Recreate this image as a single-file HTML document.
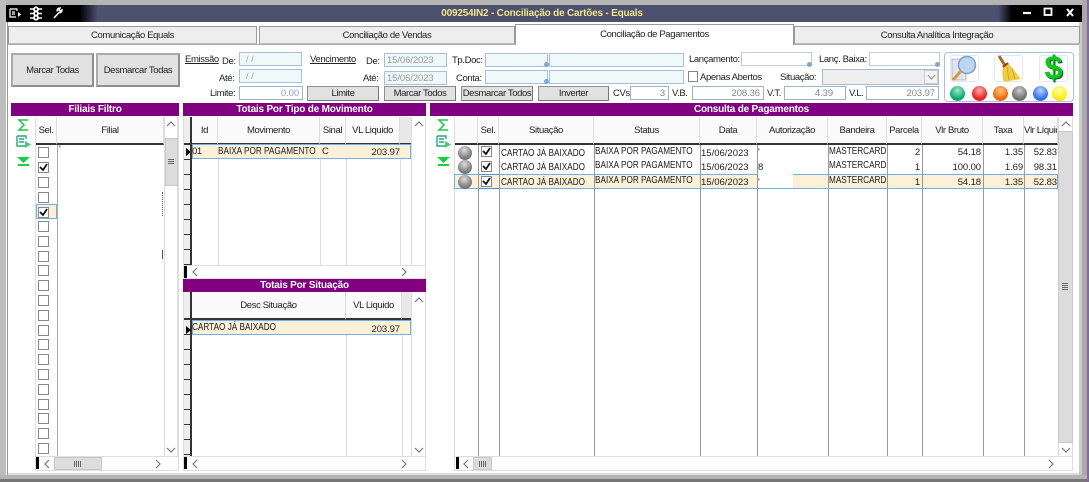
<!DOCTYPE html>
<html><head><meta charset="utf-8"><style>
html,body{margin:0;padding:0;background:#fff}
#p{position:relative;width:1089px;height:482px;overflow:hidden;background:#fff;font:9.5px "Liberation Sans","DejaVu Sans",sans-serif;letter-spacing:-.38px;color:#222;filter:blur(.3px)}
#p div,#p span.a{position:absolute;box-sizing:border-box}
.t{white-space:nowrap;line-height:12px}
.r{text-align:right;letter-spacing:-.1px}.c{text-align:center}
.d{letter-spacing:0}
.k{font-size:10px;letter-spacing:0;transform:scaleX(.82);transform-origin:0 50%}
.tab{background:#eee;border:1px solid #999;border-bottom:1px solid #bbb;text-align:center;line-height:18px;top:26px;height:18px}
.btn{background:#e1e1e1;border:1px solid #8f8f8f;border-right-color:#777;border-bottom-color:#777;text-align:center;line-height:14px;height:15px;top:86px;color:#222;white-space:nowrap}
.in{border:1px solid #a9c0d8;background:#f0f9f9;height:14px;color:#9aa;line-height:14px;padding-left:6px;letter-spacing:-.1px}
.w{border:1px solid #c4ccd4;background:#fff;height:14px}
.g{border:1px solid #9fb4c8;background:#fff;height:14px;color:#888;text-align:right;line-height:14px;padding-right:3px;top:86px;letter-spacing:-.1px}
.pur{background:#800080;color:#fff;font-weight:bold;text-align:center;height:13px;line-height:14px;font-size:10px;letter-spacing:-.2px}
.hd{background:#fafafa;top:117px;height:28px;border-bottom:2px solid #333;border-right:1px solid #ddd;text-align:center;line-height:28px}
.vl{width:1px;background:#999;top:145px}
.cb{width:11px;height:11px;border:1px solid #888;background:#fff;left:38px}
.cb svg,.ck svg{position:absolute;left:0;top:0}
.ck{width:11px;height:11px;border:1px solid #888;background:#fff;left:481px}
.ball{width:15px;height:15px;border-radius:50%;top:86px}
.gb{width:14px;height:14px;border-radius:50%;left:458px;background:radial-gradient(circle at 45% 30%,#ddd,#888 55%,#555)}
.sb{background:#fff;border:1px solid #ddd}
.th{background:#dcdcdc;border:1px solid #c8c8c8}
.ind{background:repeating-linear-gradient(#eee 0 14px,#333 14px 15px);border-right:2px solid #333}
.row{background:#fdf0d8;border-top:1px solid #6fb0e8;border-bottom:1px solid #6fb0e8}
</style></head><body><div id="p">

<!-- window frame -->
<div style="left:0;top:0;width:1089px;height:5px;background:#b4b4b4"></div>
<div style="left:0;top:0;width:6px;height:482px;background:#bdbdbd"></div>
<div style="left:7px;top:22px;width:1px;height:453px;background:#999"></div>
<div style="left:1079px;top:22px;width:3px;height:456px;background:#ccc"></div>
<div style="left:1082px;top:0;width:5px;height:482px;background:#a9a9a9"></div>
<div style="left:1087px;top:0;width:2px;height:482px;background:#7f6a9c"></div>
<div style="left:0;top:475px;width:1087px;height:4px;background:#b4b4b4"></div>
<div style="left:0;top:479px;width:1087px;height:3px;background:#777"></div>

<!-- title bar -->
<div style="left:6px;top:5px;width:1076px;height:17px;background:linear-gradient(90deg,#000 0,#000 74px,#4e5070 92px,#4e5070 992px,#000 1006px,#000 100%)"></div>
<div class="t c" style="left:292px;top:8px;width:500px;color:#f0e68c;font-weight:bold;font-size:10px;letter-spacing:-.2px">009254IN2 - Conciliação de Cartões - Equals</div>
<svg style="position:absolute;left:8px;top:6px" width="55" height="15" viewBox="0 0 55 15" fill="none" stroke="#fff">
<path d="M2 3h7v2M2 3v8h6M4 6h3M4 8h3" stroke-width="1.2"/><path d="M10 6l3 2.500-3 2.500z" fill="#fff" stroke="none"/>
<path d="M22 3h12M22 7.500h12M22 12h12" stroke-width="1.600"/>
<circle cx="28" cy="3.300" r="2.900" fill="#fff" stroke="none"/><circle cx="28" cy="7.500" r="2.900" fill="#fff" stroke="none"/><circle cx="28" cy="11.700" r="2.900" fill="#fff" stroke="none"/>
<circle cx="28" cy="3.300" r="1.100" fill="#000" stroke="none"/><circle cx="28" cy="7.500" r="1.100" fill="#000" stroke="none"/><circle cx="28" cy="11.700" r="1.100" fill="#000" stroke="none"/>
<path d="M46 12l5-5.500M51 6.500c2 .5 3-1 3-2.500l-2 1-1-1 1-2c-2 0-3.500 1.500-2.500 3.500" stroke-width="1.500"/>
</svg>
<svg style="position:absolute;left:1020px;top:5px" width="60" height="15" viewBox="0 0 60 15" fill="none" stroke="#fff">
<path d="M3 8h8" stroke-width="2.200"/><rect x="24.500" y="3.500" width="7" height="6.500" stroke-width="1.800"/><path d="M47 4l6 7M53 4l-6 7" stroke-width="2"/>
</svg>

<!-- tabs -->
<div class="tab" style="left:8px;width:249px">Comunicação Equals</div>
<div class="tab" style="left:259px;width:256px">Conciliação de Vendas</div>
<div class="tab" style="left:794px;width:286px">Consulta Analítica Integração</div>
<div style="left:8px;top:44px;width:1071px;height:1px;background:#aaa"></div>
<div style="left:515px;top:24px;width:279px;height:21px;background:#fff;border:1px solid #999;border-bottom:0;text-align:center;line-height:19px">Conciliação de Pagamentos</div>
<div style="left:8px;top:473px;width:1071px;height:2px;background:#ddd"></div>

<!-- top buttons -->
<div class="btn" style="left:11px;top:53px;width:83px;height:34px;line-height:32px;border-width:2px;border-color:#aaa #8f8f8f #8f8f8f #aaa">Marcar Todas</div>
<div class="btn" style="left:96px;top:53px;width:84px;height:34px;line-height:32px;border-width:2px;border-color:#aaa #8f8f8f #8f8f8f #aaa">Desmarcar Todas</div>

<!-- filter row -->
<div class="t" style="left:185px;top:54px;text-decoration:underline">Emissão</div>
<div class="t" style="left:222px;top:56px">De:</div>
<div class="in" style="left:239px;top:52px;width:63px">/ /</div>
<div class="t" style="left:219px;top:73px">Até:</div>
<div class="in" style="left:239px;top:69px;width:63px">/ /</div>
<div class="t" style="left:210px;top:88px">Limite:</div>
<div class="g" style="left:239px;width:64px;color:#99c">0.00</div>
<div class="btn" style="left:307px;width:72px">Limite</div>

<div class="t" style="left:310px;top:54px;text-decoration:underline">Vencimento</div>
<div class="t" style="left:366px;top:56px">De:</div>
<div class="in" style="left:384px;top:53px;width:63px;color:#999;padding-left:2px">15/06/2023</div>
<div class="t" style="left:363px;top:73px">Até:</div>
<div class="in" style="left:384px;top:71px;width:63px;color:#999;padding-left:2px">15/06/2023</div>
<div class="btn" style="left:384px;width:72px">Marcar Todos</div>
<div class="btn" style="left:461px;width:72px">Desmarcar Todos</div>
<div class="btn" style="left:538px;width:71px">Inverter</div>

<div class="t" style="left:452px;top:55px">Tp.Doc:</div>
<div class="in" style="left:485px;top:53px;width:63px"></div>
<div class="in" style="left:549px;top:53px;width:135px"></div>
<div class="t" style="left:456px;top:73px">Conta:</div>
<div class="in" style="left:485px;top:70px;width:63px"></div>
<div class="in" style="left:549px;top:70px;width:135px"></div>
<div style="left:544px;top:62px;width:5px;height:5px;border-radius:50%;background:#7fa8d8"></div>
<div style="left:544px;top:79px;width:5px;height:5px;border-radius:50%;background:#7fa8d8"></div>

<div class="t" style="left:689px;top:54px">Lançamento:</div>
<div class="w" style="left:741px;top:52px;width:71px"></div>
<div class="t" style="left:819px;top:54px">Lanç. Baixa:</div>
<div class="w" style="left:869px;top:52px;width:71px"></div>
<div style="left:807px;top:62px;width:5px;height:5px;border-radius:50%;background:#7fa8d8"></div>
<div style="left:935px;top:62px;width:5px;height:5px;border-radius:50%;background:#7fa8d8"></div>
<div style="left:688px;top:71px;width:10px;height:11px;border:1px solid #888;background:#fff"></div>
<div class="t" style="left:700px;top:72px">Apenas Abertos</div>
<div class="t" style="left:780px;top:72px">Situação:</div>
<div style="left:822px;top:69px;width:117px;height:16px;background:#eee;border:1px solid #a9bccf"></div>
<div style="left:924px;top:70px;width:14px;height:14px;border:1px solid #ccc;background:#f4f4f4"></div>
<svg style="position:absolute;left:927px;top:74px" width="9" height="7" fill="none" stroke="#999" stroke-width="1.200"><path d="M1 1l3.500 4L8 1"/></svg>

<div class="t" style="left:613px;top:88px">CVs</div>
<div class="g" style="left:630px;width:39px">3</div>
<div class="t" style="left:672px;top:88px">V.B.</div>
<div class="g" style="left:692px;width:72px">208.36</div>
<div class="t" style="left:767px;top:88px">V.T.</div>
<div class="g" style="left:784px;width:62px;padding-right:12px">4.39</div>
<div class="t" style="left:849px;top:88px">V.L.</div>
<div class="g" style="left:866px;width:73px">203.97</div>

<!-- icon panel -->
<div style="left:944px;top:52px;width:130px;height:50px;border:1px solid #a8c0dc;border-radius:4px;background:#fff"></div>
<div style="left:950px;top:55px;width:29px;height:27px;border:1px solid #e4e8ee;border-radius:3px"></div>
<div style="left:994px;top:55px;width:29px;height:27px;border:1px solid #e4e8ee;border-radius:3px"></div>
<div style="left:1039px;top:55px;width:29px;height:27px;border:1px solid #e4e8ee;border-radius:3px"></div>
<svg style="position:absolute;left:950px;top:55px" width="29" height="27" viewBox="0 0 29 27">
<path d="M2 4h14v21H2z" fill="#dfe4f0" stroke="#aab" stroke-width=".8"/>
<circle cx="17" cy="10" r="8.500" fill="#bcd6f2" stroke="#7d9fc8" stroke-width="1.500"/><path d="M11 16L3 25" stroke="#d89a3a" stroke-width="3"/></svg>
<svg style="position:absolute;left:994px;top:55px" width="29" height="27" viewBox="0 0 29 27">
<path d="M5 1l7 11" stroke="#a06a24" stroke-width="3"/><path d="M9 12l5-4 13 16-17 3c-2-4-2-10-1-15z" fill="#f0cc40"/><path d="M9 12l5-4" stroke="#b03020" stroke-width="2"/><path d="M13 12l2 13M18 13l3 11" stroke="#c8a028" stroke-width=".8"/></svg>
<div class="t" style="left:1039px;top:54px;width:29px;text-align:center;font:bold 33px/28px 'Liberation Sans',sans-serif;letter-spacing:0;color:#12c818;text-shadow:1px 1px 0 #053">$</div>
<div class="ball" style="left:950px;background:radial-gradient(circle at 50% 30%,#9fe8c8,#10b070 60%,#0a8a58)"></div>
<div class="ball" style="left:972px;background:radial-gradient(circle at 50% 30%,#ffb0b0,#f02828 60%,#c81818)"></div>
<div class="ball" style="left:993px;background:radial-gradient(circle at 50% 30%,#ffc890,#f86c08 60%,#d85800)"></div>
<div class="ball" style="left:1012px;background:radial-gradient(circle at 50% 30%,#ccc,#777 60%,#555)"></div>
<div class="ball" style="left:1033px;background:radial-gradient(circle at 50% 30%,#b8d4ff,#3c78ec 60%,#2458c8)"></div>
<div class="ball" style="left:1052px;background:radial-gradient(circle at 50% 30%,#ffffc0,#fff010 60%,#e0d000)"></div>

<!-- purple bars -->
<div class="pur" style="left:11px;top:103px;width:168px">Filiais Filtro</div>
<div class="pur" style="left:183px;top:103px;width:243px">Totais Por Tipo de Movimento</div>
<div class="pur" style="left:430px;top:103px;width:643px">Consulta de Pagamentos</div>
<div class="pur" style="left:183px;top:279px;width:243px">Totais Por Situação</div>

<!-- side icons -->
<svg style="position:absolute;left:15px;top:117px" width="18" height="52" viewBox="0 0 18 52" fill="none">
<path d="M13 3H4l5 5-5 5h9" stroke="#18c848" stroke-width="1.500"/>
<path d="M2 19h9v3M2 19v10h8M4 22h5M4 25h5" stroke="#2aa878" stroke-width="1.400"/><path d="M10 24l6 3.500-6 3.500z" fill="#3fd070"/>
<path d="M2 40h13l-6.500 6z" fill="#18d040"/><path d="M3 47h11v2H3z" fill="#18d040"/></svg>
<svg style="position:absolute;left:435px;top:117px" width="18" height="52" viewBox="0 0 18 52" fill="none">
<path d="M13 3H4l5 5-5 5h9" stroke="#18c848" stroke-width="1.500"/>
<path d="M2 19h9v3M2 19v10h8M4 22h5M4 25h5" stroke="#2aa878" stroke-width="1.400"/><path d="M10 24l6 3.500-6 3.500z" fill="#3fd070"/>
<path d="M2 40h13l-6.500 6z" fill="#18d040"/><path d="M3 47h11v2H3z" fill="#18d040"/></svg>

<!-- GRID 1 -->
<div style="left:35px;top:117px;width:144px;height:354px;border:1px solid #ddd;border-top:0"></div>
<div class="hd" style="left:36px;width:21px">Sel.</div>
<div class="hd" style="left:57px;width:107px">Filial</div>
<div class="vl" style="left:57px;height:312px;background:#aaa"></div>
<div class="t" style="left:59px;top:144px">'</div>
<div style="left:162px;top:192px;width:1px;height:24px;border-left:1px dotted #555"></div>
<div style="left:162px;top:250px;width:1px;height:9px;background:#555"></div>
<div class="row" style="left:36px;top:204px;width:21px;height:15px;border:1px solid #6fb0e8"></div>
<div class="cb" style="top:147px"></div>
<div class="cb" style="top:162px"><svg width="9" height="9"><path d="M1 4l3 3 4-6" fill="none" stroke="#111" stroke-width="1.800"/></svg></div>
<div class="cb" style="top:177px"></div>
<div class="cb" style="top:192px"></div>
<div class="cb" style="top:207px"><svg width="9" height="9"><path d="M1 4l3 3 4-6" fill="none" stroke="#111" stroke-width="1.800"/></svg></div>
<div class="cb" style="top:221px"></div>
<div class="cb" style="top:236px"></div>
<div class="cb" style="top:251px"></div>
<div class="cb" style="top:265px"></div>
<div class="cb" style="top:280px"></div>
<div class="cb" style="top:295px"></div>
<div class="cb" style="top:310px"></div>
<div class="cb" style="top:325px"></div>
<div class="cb" style="top:339px"></div>
<div class="cb" style="top:354px"></div>
<div class="cb" style="top:369px"></div>
<div class="cb" style="top:384px"></div>
<div class="cb" style="top:399px"></div>
<div class="cb" style="top:413px"></div>
<div class="cb" style="top:428px"></div>
<div class="cb" style="top:443px"></div>
<div class="sb" style="left:164px;top:117px;width:14px;height:340px;border-width:0 1px"></div>
<svg style="position:absolute;left:166px;top:120px" width="10" height="8" fill="none" stroke="#777" stroke-width="1.200"><path d="M1 6l4-4 4 4"/></svg>
<div class="th" style="left:165px;top:138px;width:13px;height:48px"></div>
<div style="left:168px;top:159px;width:6px;height:6px;background:repeating-linear-gradient(#666 0 1px,#dcdcdc 1px 2px)"></div>
<svg style="position:absolute;left:166px;top:446px" width="10" height="8" fill="none" stroke="#777" stroke-width="1.200"><path d="M1 2l4 4 4-4"/></svg>
<div style="left:35px;top:456px;width:144px;height:1px;background:#ddd"></div>
<div style="left:36px;top:457px;width:3px;height:12px;background:#000"></div>
<svg style="position:absolute;left:43px;top:459px" width="8" height="10" fill="none" stroke="#777" stroke-width="1.200"><path d="M6 1L2 5l4 4"/></svg>
<div class="th" style="left:54px;top:457px;width:48px;height:13px"></div>
<div style="left:74px;top:461px;width:7px;height:6px;background:repeating-linear-gradient(90deg,#666 0 1px,#dcdcdc 1px 2px)"></div>
<svg style="position:absolute;left:154px;top:459px" width="8" height="10" fill="none" stroke="#777" stroke-width="1.200"><path d="M2 1l4 4-4 4"/></svg>

<!-- GRID 2 -->
<div style="left:183px;top:117px;width:243px;height:162px;border:1px solid #ddd;border-top:0"></div>
<div style="left:184px;top:117px;width:8px;height:28px;background:#eee;border-right:2px solid #333;border-bottom:2px solid #333"></div>
<div class="ind" style="left:184px;top:145px;width:8px;height:120px"></div>
<div class="hd" style="left:192px;width:26px">Id</div>
<div class="hd" style="left:218px;width:102px">Movimento</div>
<div class="hd" style="left:320px;width:26px">Sinal</div>
<div class="hd" style="left:346px;width:54px">VL Liquido</div>
<div class="hd" style="left:400px;width:11px;background:#e8e8e8;border-right:0"></div>
<div class="vl" style="left:218px;height:120px;background:#ddd"></div>
<div class="vl" style="left:320px;height:120px;background:#ddd"></div>
<div class="vl" style="left:346px;height:120px;background:#ddd"></div>
<div class="vl" style="left:400px;height:120px;background:#ddd"></div>
<div class="row t" style="left:192px;top:144px;width:219px;height:15px;border:1px solid #6fb0e8;line-height:12px"></div>
<div class="t" style="left:192px;top:146px">01</div>
<div class="t k" style="left:218px;top:146px">BAIXA POR PAGAMENTO</div>
<div class="t" style="left:322px;top:146px">C</div>
<div class="t r" style="left:346px;top:147px;width:54px">203.97</div>
<svg style="position:absolute;left:186px;top:148px" width="5" height="8"><path d="M0 0l5 4-5 4z" fill="#000"/></svg>
<div class="sb" style="left:411px;top:117px;width:15px;height:149px;border-width:0 1px"></div>
<svg style="position:absolute;left:414px;top:120px" width="10" height="8" fill="none" stroke="#777" stroke-width="1.200"><path d="M1 6l4-4 4 4"/></svg>
<div style="left:183px;top:265px;width:243px;height:1px;background:#ddd"></div>
<div style="left:184px;top:266px;width:3px;height:12px;background:#000"></div>
<svg style="position:absolute;left:191px;top:267px" width="8" height="10" fill="none" stroke="#777" stroke-width="1.200"><path d="M6 1L2 5l4 4"/></svg>
<svg style="position:absolute;left:400px;top:267px" width="8" height="10" fill="none" stroke="#777" stroke-width="1.200"><path d="M2 1l4 4-4 4"/></svg>

<!-- GRID 2b -->
<div style="left:183px;top:292px;width:243px;height:179px;border:1px solid #ddd;border-top:0"></div>
<div style="left:184px;top:292px;width:8px;height:28px;background:#eee;border-right:2px solid #333;border-bottom:2px solid #333"></div>
<div class="ind" style="left:184px;top:320px;width:8px;height:136px"></div>
<div class="hd" style="left:192px;top:292px;width:154px">Desc Situação</div>
<div class="hd" style="left:346px;top:292px;width:56px">VL Liquido</div>
<div class="hd" style="left:402px;top:292px;width:9px;background:#e8e8e8;border-right:0"></div>
<div class="vl" style="left:346px;top:320px;height:136px;background:#ddd"></div>
<div class="vl" style="left:402px;top:320px;height:136px;background:#ddd"></div>
<div class="row" style="left:192px;top:320px;width:219px;height:15px;border:1px solid #6fb0e8"></div>
<div class="t k" style="left:192px;top:322px">CARTAO JÁ BAIXADO</div>
<div class="t r" style="left:346px;top:324px;width:54px">203.97</div>
<svg style="position:absolute;left:186px;top:326px" width="5" height="8"><path d="M0 0l5 4-5 4z" fill="#000"/></svg>
<div class="sb" style="left:411px;top:292px;width:15px;height:165px;border-width:0 1px"></div>
<svg style="position:absolute;left:414px;top:296px" width="10" height="8" fill="none" stroke="#777" stroke-width="1.200"><path d="M1 6l4-4 4 4"/></svg>
<svg style="position:absolute;left:414px;top:446px" width="10" height="8" fill="none" stroke="#777" stroke-width="1.200"><path d="M1 2l4 4 4-4"/></svg>
<div style="left:183px;top:456px;width:243px;height:1px;background:#ddd"></div>
<div style="left:184px;top:457px;width:3px;height:12px;background:#000"></div>
<svg style="position:absolute;left:191px;top:459px" width="8" height="10" fill="none" stroke="#777" stroke-width="1.200"><path d="M6 1L2 5l4 4"/></svg>
<svg style="position:absolute;left:400px;top:459px" width="8" height="10" fill="none" stroke="#777" stroke-width="1.200"><path d="M2 1l4 4-4 4"/></svg>

<!-- GRID 3 -->
<div style="left:454px;top:117px;width:619px;height:354px;border:1px solid #ddd;border-top:0"></div>
<div class="hd" style="left:455px;width:23px"></div>
<div class="hd" style="left:478px;width:21px">Sel.</div>
<div class="hd" style="left:499px;width:95px">Situação</div>
<div class="hd" style="left:594px;width:106px">Status</div>
<div class="hd" style="left:700px;width:57px">Data</div>
<div class="hd" style="left:757px;width:71px">Autorização</div>
<div class="hd" style="left:828px;width:59px">Bandeira</div>
<div class="hd" style="left:887px;width:35px">Parcela</div>
<div class="hd" style="left:922px;width:61px">Vlr Bruto</div>
<div class="hd" style="left:983px;width:41px">Taxa</div>
<div class="hd" style="left:1024px;width:34px;overflow:hidden;white-space:nowrap;text-align:left">Vlr Líquido</div>
<!-- selected row -->
<div class="row" style="left:455px;top:174px;width:302px;height:15px"></div>
<div style="left:757px;top:174px;width:36px;height:15px;background:#fff;border-bottom:1px solid #6fb0e8"></div>
<div class="row" style="left:793px;top:174px;width:265px;height:15px;border-right:1px solid #6fb0e8"></div>
<div style="left:454px;top:174px;width:25px;height:15px;border:1px solid #6fb0e8"></div>
<div style="left:478px;top:174px;width:22px;height:15px;border:1px solid #4a90e0"></div>
<div class="vl" style="left:478px;height:311px"></div>
<div class="vl" style="left:499px;height:311px"></div>
<div class="vl" style="left:594px;height:311px"></div>
<div class="vl" style="left:700px;height:311px"></div>
<div class="vl" style="left:757px;height:311px"></div>
<div class="vl" style="left:828px;height:311px"></div>
<div class="vl" style="left:887px;height:311px"></div>
<div class="vl" style="left:922px;height:311px"></div>
<div class="vl" style="left:983px;height:311px"></div>
<div class="vl" style="left:1024px;height:311px"></div>

<div class="gb" style="top:146px"></div><div class="gb" style="top:160px"></div><div class="gb" style="top:175px"></div>
<div class="ck" style="top:146px"><svg width="9" height="9"><path d="M1 4l3 3 4-6" fill="none" stroke="#111" stroke-width="1.800"/></svg></div>
<div class="ck" style="top:161px"><svg width="9" height="9"><path d="M1 4l3 3 4-6" fill="none" stroke="#111" stroke-width="1.800"/></svg></div>
<div class="ck" style="top:176px"><svg width="9" height="9"><path d="M1 4l3 3 4-6" fill="none" stroke="#111" stroke-width="1.800"/></svg></div>

<div class="t k" style="left:501px;top:148px">CARTAO JÁ BAIXADO</div>
<div class="t k" style="left:595px;top:146px">BAIXA POR PAGAMENTO</div>
<div class="t d" style="left:701px;top:148px">15/06/2023</div>
<div class="t" style="left:758px;top:147px">'</div>
<div class="t k" style="left:829px;top:146px">MASTERCARD</div>
<div class="t r" style="left:887px;top:147px;width:33px">2</div>
<div class="t r" style="left:922px;top:147px;width:59px">54.18</div>
<div class="t r" style="left:983px;top:147px;width:40px">1.35</div>
<div class="t r" style="left:1024px;top:147px;width:33px">52.83</div>

<div class="t k" style="left:501px;top:162px">CARTAO JÁ BAIXADO</div>
<div class="t k" style="left:595px;top:160px">BAIXA POR PAGAMENTO</div>
<div class="t d" style="left:701px;top:162px">15/06/2023</div>
<div class="t" style="left:758px;top:162px">8</div>
<div class="t k" style="left:829px;top:160px">MASTERCARD</div>
<div class="t r" style="left:887px;top:162px;width:33px">1</div>
<div class="t r" style="left:922px;top:162px;width:59px">100.00</div>
<div class="t r" style="left:983px;top:162px;width:40px">1.69</div>
<div class="t r" style="left:1024px;top:162px;width:33px">98.31</div>

<div class="t k" style="left:501px;top:177px">CARTAO JÁ BAIXADO</div>
<div class="t k" style="left:595px;top:175px">BAIXA POR PAGAMENTO</div>
<div class="t d" style="left:701px;top:177px">15/06/2023</div>
<div class="t" style="left:758px;top:177px">'</div>
<div class="t k" style="left:829px;top:175px">MASTERCARD</div>
<div class="t r" style="left:887px;top:177px;width:33px">1</div>
<div class="t r" style="left:922px;top:177px;width:59px">54.18</div>
<div class="t r" style="left:983px;top:177px;width:40px">1.35</div>
<div class="t r" style="left:1024px;top:177px;width:33px">52.83</div>

<div class="sb" style="left:1058px;top:117px;width:15px;height:340px;border-width:0 1px"></div>
<svg style="position:absolute;left:1061px;top:120px" width="10" height="8" fill="none" stroke="#777" stroke-width="1.200"><path d="M1 6l4-4 4 4"/></svg>
<div class="th" style="left:1058px;top:131px;width:15px;height:312px"></div>
<div style="left:1062px;top:283px;width:6px;height:7px;background:repeating-linear-gradient(#666 0 1px,#dcdcdc 1px 2px)"></div>
<svg style="position:absolute;left:1061px;top:446px" width="10" height="8" fill="none" stroke="#777" stroke-width="1.200"><path d="M1 2l4 4 4-4"/></svg>
<div style="left:454px;top:456px;width:619px;height:1px;background:#ddd"></div>
<div style="left:456px;top:457px;width:3px;height:12px;background:#000"></div>
<svg style="position:absolute;left:462px;top:459px" width="8" height="10" fill="none" stroke="#777" stroke-width="1.200"><path d="M6 1L2 5l4 4"/></svg>
<div class="th" style="left:473px;top:457px;width:19px;height:13px"></div>
<div style="left:479px;top:461px;width:7px;height:6px;background:repeating-linear-gradient(90deg,#666 0 1px,#dcdcdc 1px 2px)"></div>
<svg style="position:absolute;left:1047px;top:459px" width="8" height="10" fill="none" stroke="#777" stroke-width="1.200"><path d="M2 1l4 4-4 4"/></svg>

</div></body></html>
